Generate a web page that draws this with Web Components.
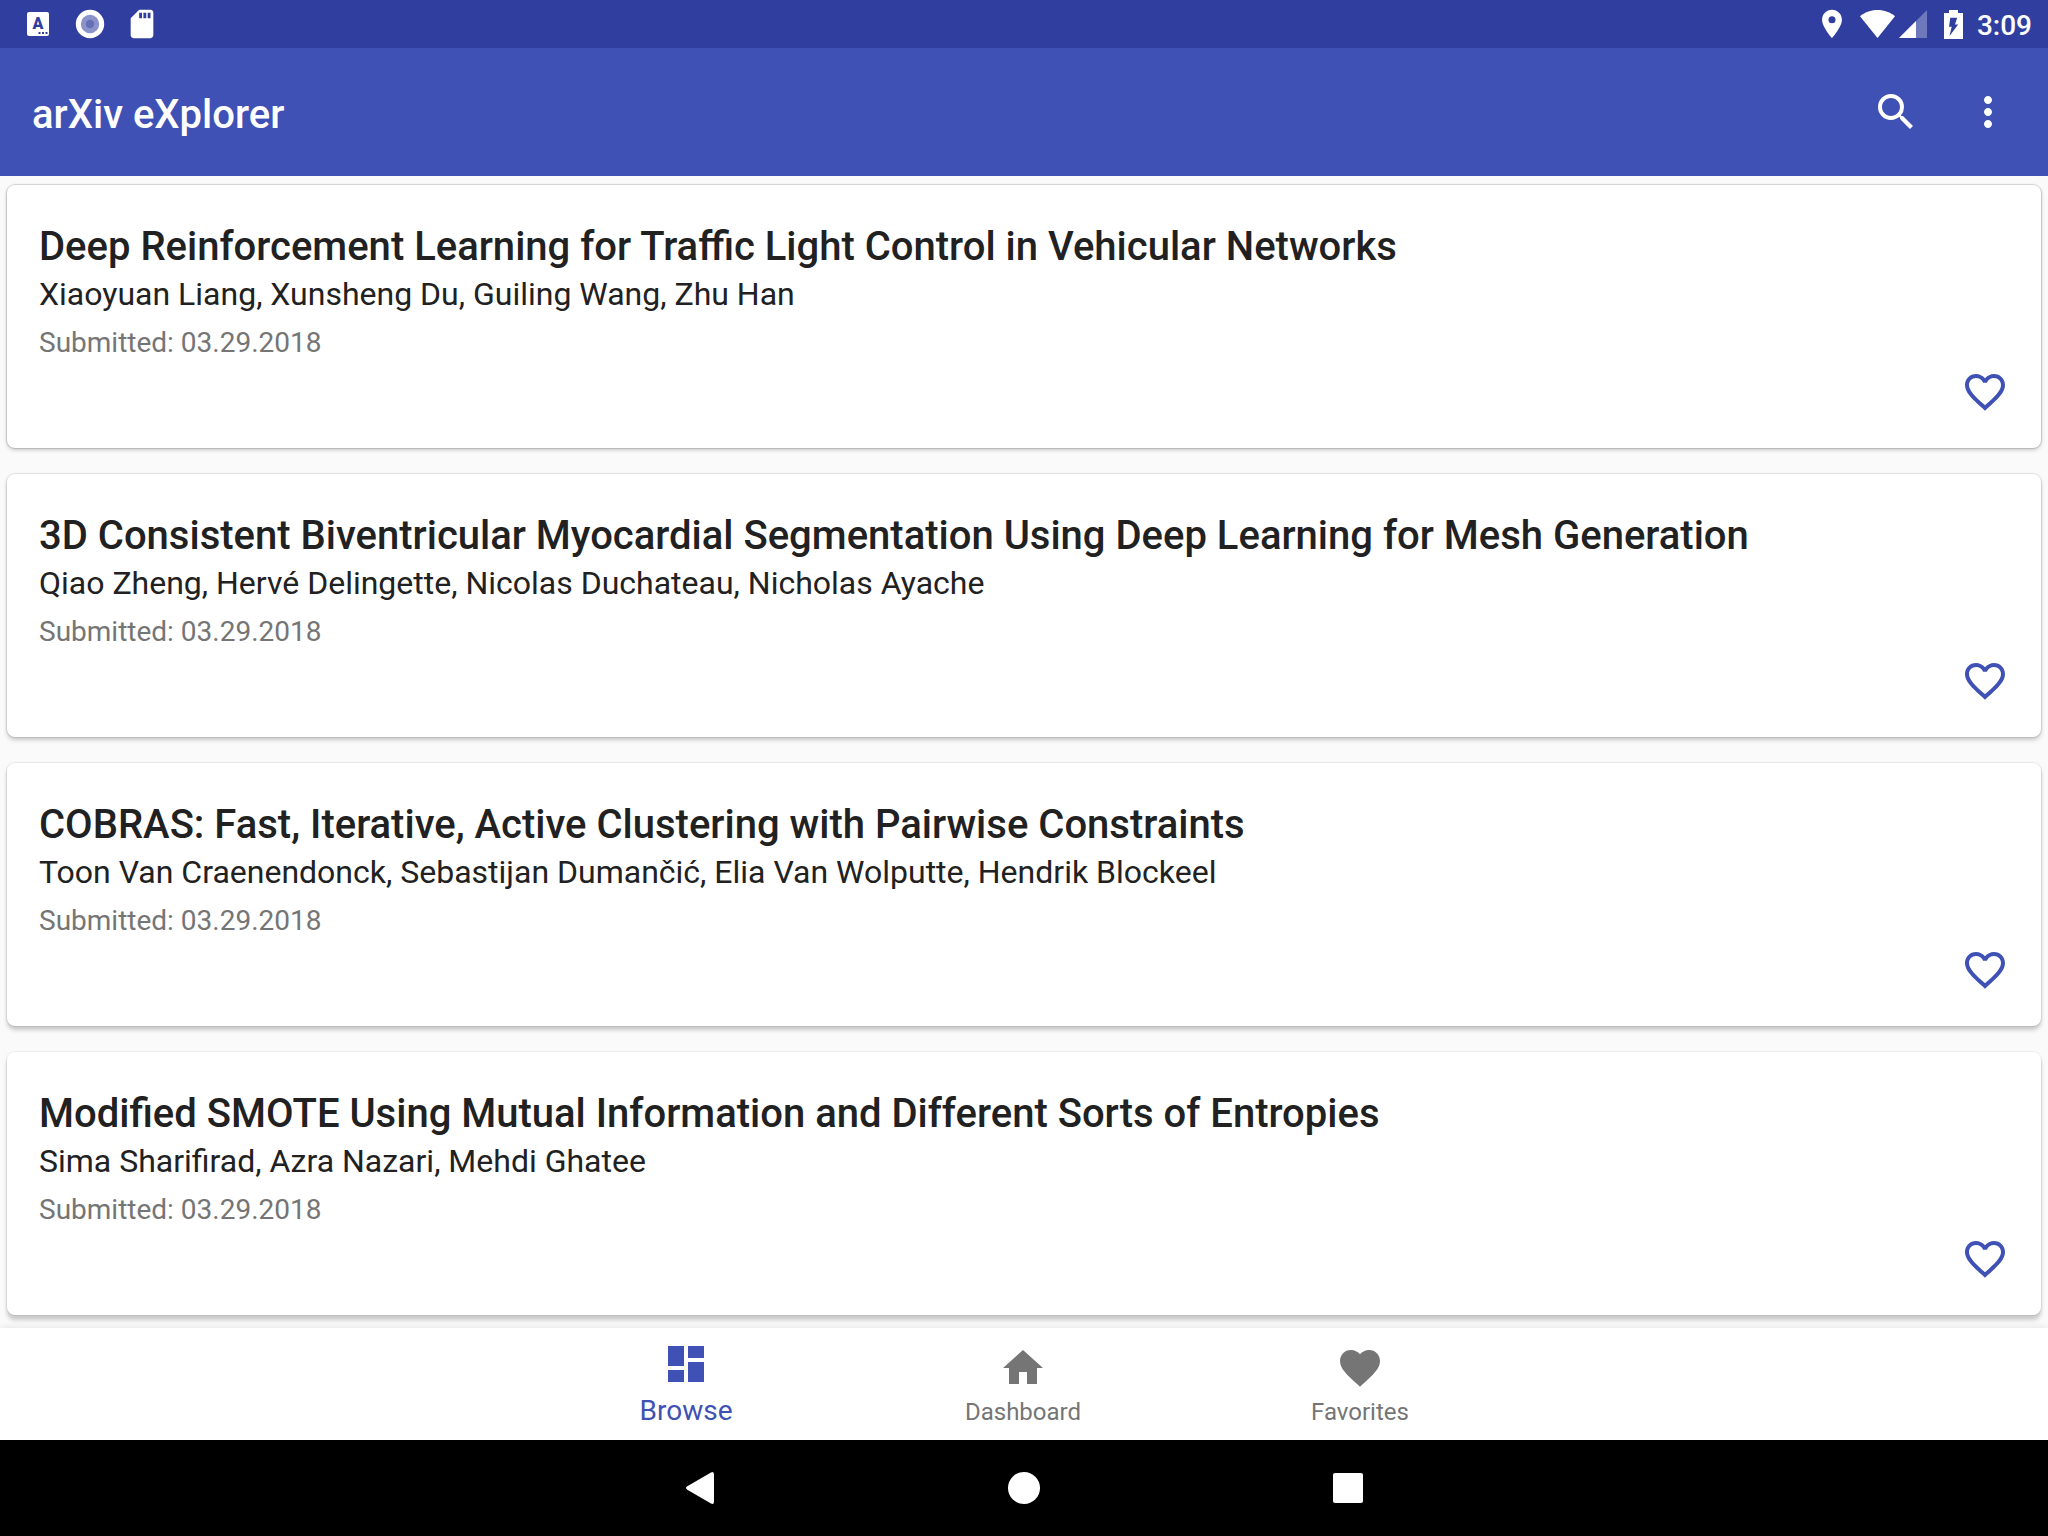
<!DOCTYPE html>
<html lang="en">
<head>
<meta charset="utf-8">
<meta name="viewport" content="width=device-width, initial-scale=1">
<title>arXiv eXplorer</title>
<style>
  html, body { height: 100%; margin: 0; }
  body {
    font-family: Roboto, "Noto Sans", sans-serif;
    background: #fafafa;
    color: #212121;
    --primary: #3f51b5;
    --primary-dark: #303f9f;
    --secondary-text: #757575;
  }
</style>
</head>
<body>
<explorer-app></explorer-app>
<script>
const define = (name, html) => {
  const template = document.createElement('template');
  template.innerHTML = html;
  customElements.define(name, class extends HTMLElement {
    constructor() {
      super();
      this.attachShadow({ mode: 'open' }).append(template.content.cloneNode(true));
    }
  });
};

define('status-bar', `
<style>
  :host { display: flex; justify-content: space-between; align-items: center; height: 48px; flex: none;
    padding: 0 16px 0 21px; background: var(--primary-dark); color: #fff; }
  .group { display: flex; align-items: center; height: 100%; }
  .notes { gap: 18px; }
  svg { display: block; fill: #fff; }
  .wifi { margin: 0 4px 0 11px; }
  .battery { margin: 0 14px 0 17px; }
  time { font-size: 28px; line-height: 34px; font-weight: 500; padding-top: 4px; }
</style>
<div class="group notes">
  <svg width="34" height="34" viewBox="0 0 34 34" aria-hidden="true">
    <rect x="6" y="5" width="22" height="24" rx="2"/>
    <text x="17" y="22" text-anchor="middle" font-family="Roboto" font-size="16" font-weight="900" fill="#303f9f">A</text>
    <path fill="#303f9f" d="M17.500 25h2v2h-2zM21 25h2v2h-2zM24.500 25h2v2h-2z"/>
  </svg>
  <svg width="34" height="34" viewBox="0 0 34 34" aria-hidden="true">
    <circle cx="17" cy="17" r="14.200"/><circle cx="17" cy="17" r="9.200" fill="#8a93ca"/><circle cx="17" cy="17" r="4.200" fill="#6570b8"/>
  </svg>
  <svg width="34" height="34" viewBox="0 0 24 24" aria-hidden="true">
    <path d="M18 2h-8L4.020 8 4 20c0 1.100.9 2 2 2h12c1.100 0 2-.9 2-2V4c0-1.100-.9-2-2-2zm-6 6h-2V4h2v4zm3 0h-2V4h2v4zm3 0h-2V4h2v4z"/>
  </svg>
</div>
<div class="group">
  <svg width="34" height="34" viewBox="0 0 24 24" aria-hidden="true">
    <path d="M12 2C8.130 2 5 5.130 5 9c0 5.250 7 13 7 13s7-7.750 7-13c0-3.870-3.130-7-7-7zm0 9.500a2.500 2.500 0 0 1 0-5 2.500 2.500 0 0 1 0 5z"/>
  </svg>
  <svg class="wifi" width="35" height="28" viewBox="0 0 35 28" aria-hidden="true">
    <path d="M17.500 28 0 6.200C4.500 2.400 10.500 0 17.500 0S30.500 2.400 35 6.200z"/>
  </svg>
  <svg width="28" height="28" viewBox="0 0 28 28" aria-hidden="true">
    <path fill-opacity=".3" d="M0 28 28 0v28z"/><path d="M0 28 17 11v17z"/>
  </svg>
  <svg class="battery" width="19" height="29" viewBox="0 0 19 29" aria-hidden="true">
    <path fill-rule="evenodd" d="M0 3h5V0h9v3h5v26H0zM6.300 7.700 5 16.700h2.700L5.500 26 14.200 14.500H11l2.200-6.800z"/>
  </svg>
  <time>3:09</time>
</div>`);

define('app-bar', `
<style>
  :host { display: flex; align-items: center; justify-content: space-between; height: 128px; flex: none;
    padding: 0 36px 0 32px; background: var(--primary); color: #fff; }
  h1 { margin: 0; font-size: 40px; line-height: 48px; font-weight: 500; padding-top: 6px; }
  .actions { display: flex; gap: 44px; }
  button { display: block; padding: 0; border: 0; background: none; color: inherit; cursor: pointer; }
  svg { display: block; width: 48px; height: 48px; fill: currentColor; }
</style>
<h1><slot></slot></h1>
<div class="actions">
  <button type="button" aria-label="Search"><svg viewBox="0 0 24 24"><path d="M15.500 14h-.790l-.280-.270A6.471 6.471 0 0 0 16 9.500 6.500 6.500 0 1 0 9.500 16c1.610 0 3.090-.590 4.230-1.570l.270.280v.790l5 4.990L20.490 19l-4.990-5zm-6 0C7.010 14 5 11.990 5 9.500S7.010 5 9.500 5 14 7.010 14 9.500 11.990 14 9.500 14z"/></svg></button>
  <button type="button" aria-label="More options"><svg viewBox="0 0 24 24"><path d="M12 8c1.100 0 2-.9 2-2s-.9-2-2-2-2 .9-2 2 .9 2 2 2zm0 2c-1.100 0-2 .9-2 2s.9 2 2 2 2-.9 2-2-.9-2-2-2zm0 6c-1.100 0-2 .9-2 2s.9 2 2 2 2-.9 2-2-.9-2-2-2z"/></svg></button>
</div>`);

define('paper-card', `
<style>
  :host { display: flex; flex-direction: column; padding: 38px 32px 32px; background: #fff; border-radius: 8px;
    box-shadow: 0 0 1px 1px rgba(0,0,0,var(--edge, .14)), 0 var(--drop, 2px) 4px rgba(0,0,0,.2); }
  h2 { margin: 0; font-size: 40px; line-height: 48px; font-weight: 500; }
  p { margin: 4px 0 0; font-size: 32px; line-height: 38px; }
  .date { margin-top: 12px; font-size: 28px; line-height: 36px; color: var(--secondary-text); }
  button { display: block; align-self: flex-end; margin-top: 7px; padding: 0; border: 0; background: none; color: var(--primary); cursor: pointer; }
  svg { display: block; width: 48px; height: 48px; fill: currentColor; }
</style>
<h2><slot name="title"></slot></h2>
<p><slot name="authors"></slot></p>
<p class="date"><slot name="date"></slot></p>
<button type="button" aria-label="Add to favorites"><svg viewBox="0 0 24 24"><path d="M16.500 3c-1.740 0-3.410.810-4.500 2.090C10.910 3.810 9.240 3 7.500 3 4.420 3 2 5.420 2 8.500c0 3.780 3.400 6.860 8.550 11.540L12 21.350l1.450-1.320C18.600 15.360 22 12.280 22 8.500 22 5.420 19.580 3 16.500 3zm-4.400 15.550l-.1.100-.1-.1C7.140 14.240 4 11.390 4 8.500 4 6.500 5.500 5 7.500 5c1.540 0 3.040.990 3.570 2.360h1.870C13.460 5.990 14.960 5 16.500 5c2 0 3.500 1.500 3.500 3.500 0 2.890-3.140 5.740-7.900 10.050z"/></svg></button>`);

define('paper-list', `
<style>
  :host { display: flex; flex-direction: column; gap: 26px; flex: 1; min-height: 0; overflow: hidden; padding: 9px 7px 0; }
  ::slotted(*) { flex: none; }
  ::slotted(:nth-child(2)) { --drop: 3px; --edge: .1; }
  ::slotted(:nth-child(3)) { --drop: 4px; --edge: .08; }
  ::slotted(:nth-child(4)) { --drop: 5px; --edge: .06; }
</style>
<slot></slot>`);

define('tab-item', `
<style>
  :host { display: block; width: 337px; color: var(--secondary-text); }
  a { display: flex; flex-direction: column; align-items: center; height: 100%; box-sizing: border-box; padding-top: 16px;
    color: inherit; text-decoration: none; font-size: 24px; line-height: 30px; }
  :host([active]) { color: var(--primary); }
  :host([active]) a { padding-top: 12px; font-size: 28px; line-height: 36px; }
  .label { margin-top: 5px; }
  ::slotted(svg) { display: block; width: 48px; height: 48px; fill: currentColor; }
</style>
<a href="#"><slot name="icon"></slot><span class="label"><slot></slot></span></a>`);

define('tab-bar', `
<style>
  :host { display: flex; flex: none; position: relative; background: #fff; box-shadow: 0 0 8px rgba(0,0,0,.1); }
  nav { display: flex; justify-content: center; flex: 1; height: 112px; padding-right: 2px; }
</style>
<nav aria-label="Sections"><slot></slot></nav>`);

define('system-bar', `
<style>
  :host { display: flex; flex: none; position: relative; align-items: center; justify-content: center; gap: 276px; height: 96px; background: #000; }
  button { display: block; padding: 0; border: 0; background: none; cursor: pointer; }
  svg { display: block; width: 48px; height: 48px; fill: #fff; }
</style>
<button type="button" aria-label="Back"><svg viewBox="0 0 48 48"><path d="M11.300 22.300 35 8.400Q38 7 38 10.500v27Q38 41 35 39.600L11.300 25.700Q8.700 24 11.300 22.300z"/></svg></button>
<button type="button" aria-label="Home"><svg viewBox="0 0 48 48"><circle cx="24" cy="24" r="16"/></svg></button>
<button type="button" aria-label="Recent apps"><svg viewBox="0 0 48 48"><rect x="9" y="9" width="30" height="30" rx="2"/></svg></button>`);

define('explorer-app', `
<style>
  :host { display: flex; flex-direction: column; height: 100vh; overflow: hidden; }
</style>
<status-bar></status-bar>
<app-bar>arXiv eXplorer</app-bar>
<paper-list>
  <paper-card>
    <span slot="title">Deep Reinforcement Learning for Traffic Light Control in Vehicular Networks</span>
    <span slot="authors">Xiaoyuan Liang, Xunsheng Du, Guiling Wang, Zhu Han</span>
    <span slot="date">Submitted: 03.29.2018</span>
  </paper-card>
  <paper-card>
    <span slot="title">3D Consistent Biventricular Myocardial Segmentation Using Deep Learning for Mesh Generation</span>
    <span slot="authors">Qiao Zheng, Hervé Delingette, Nicolas Duchateau, Nicholas Ayache</span>
    <span slot="date">Submitted: 03.29.2018</span>
  </paper-card>
  <paper-card>
    <span slot="title">COBRAS: Fast, Iterative, Active Clustering with Pairwise Constraints</span>
    <span slot="authors">Toon Van Craenendonck, Sebastijan Dumančić, Elia Van Wolputte, Hendrik Blockeel</span>
    <span slot="date">Submitted: 03.29.2018</span>
  </paper-card>
  <paper-card>
    <span slot="title">Modified SMOTE Using Mutual Information and Different Sorts of Entropies</span>
    <span slot="authors">Sima Sharifirad, Azra Nazari, Mehdi Ghatee</span>
    <span slot="date">Submitted: 03.29.2018</span>
  </paper-card>
</paper-list>
<tab-bar>
  <tab-item active><svg slot="icon" viewBox="0 0 24 24"><path d="M3 13h8V3H3v10zm0 8h8v-6H3v6zm10 0h8V11h-8v10zm0-18v6h8V3h-8z"/></svg>Browse</tab-item>
  <tab-item><svg slot="icon" viewBox="0 0 24 24"><path d="M10 20v-6h4v6h5v-8h3L12 3 2 12h3v8z"/></svg>Dashboard</tab-item>
  <tab-item><svg slot="icon" viewBox="0 0 24 24"><path d="M12 21.350l-1.450-1.320C5.400 15.360 2 12.280 2 8.500 2 5.420 4.420 3 7.500 3c1.740 0 3.410.810 4.500 2.090C13.090 3.810 14.760 3 16.500 3 19.580 3 22 5.420 22 8.500c0 3.780-3.400 6.860-8.550 11.540L12 21.350z"/></svg>Favorites</tab-item>
</tab-bar>
<system-bar></system-bar>`);
</script>
</body>
</html>
